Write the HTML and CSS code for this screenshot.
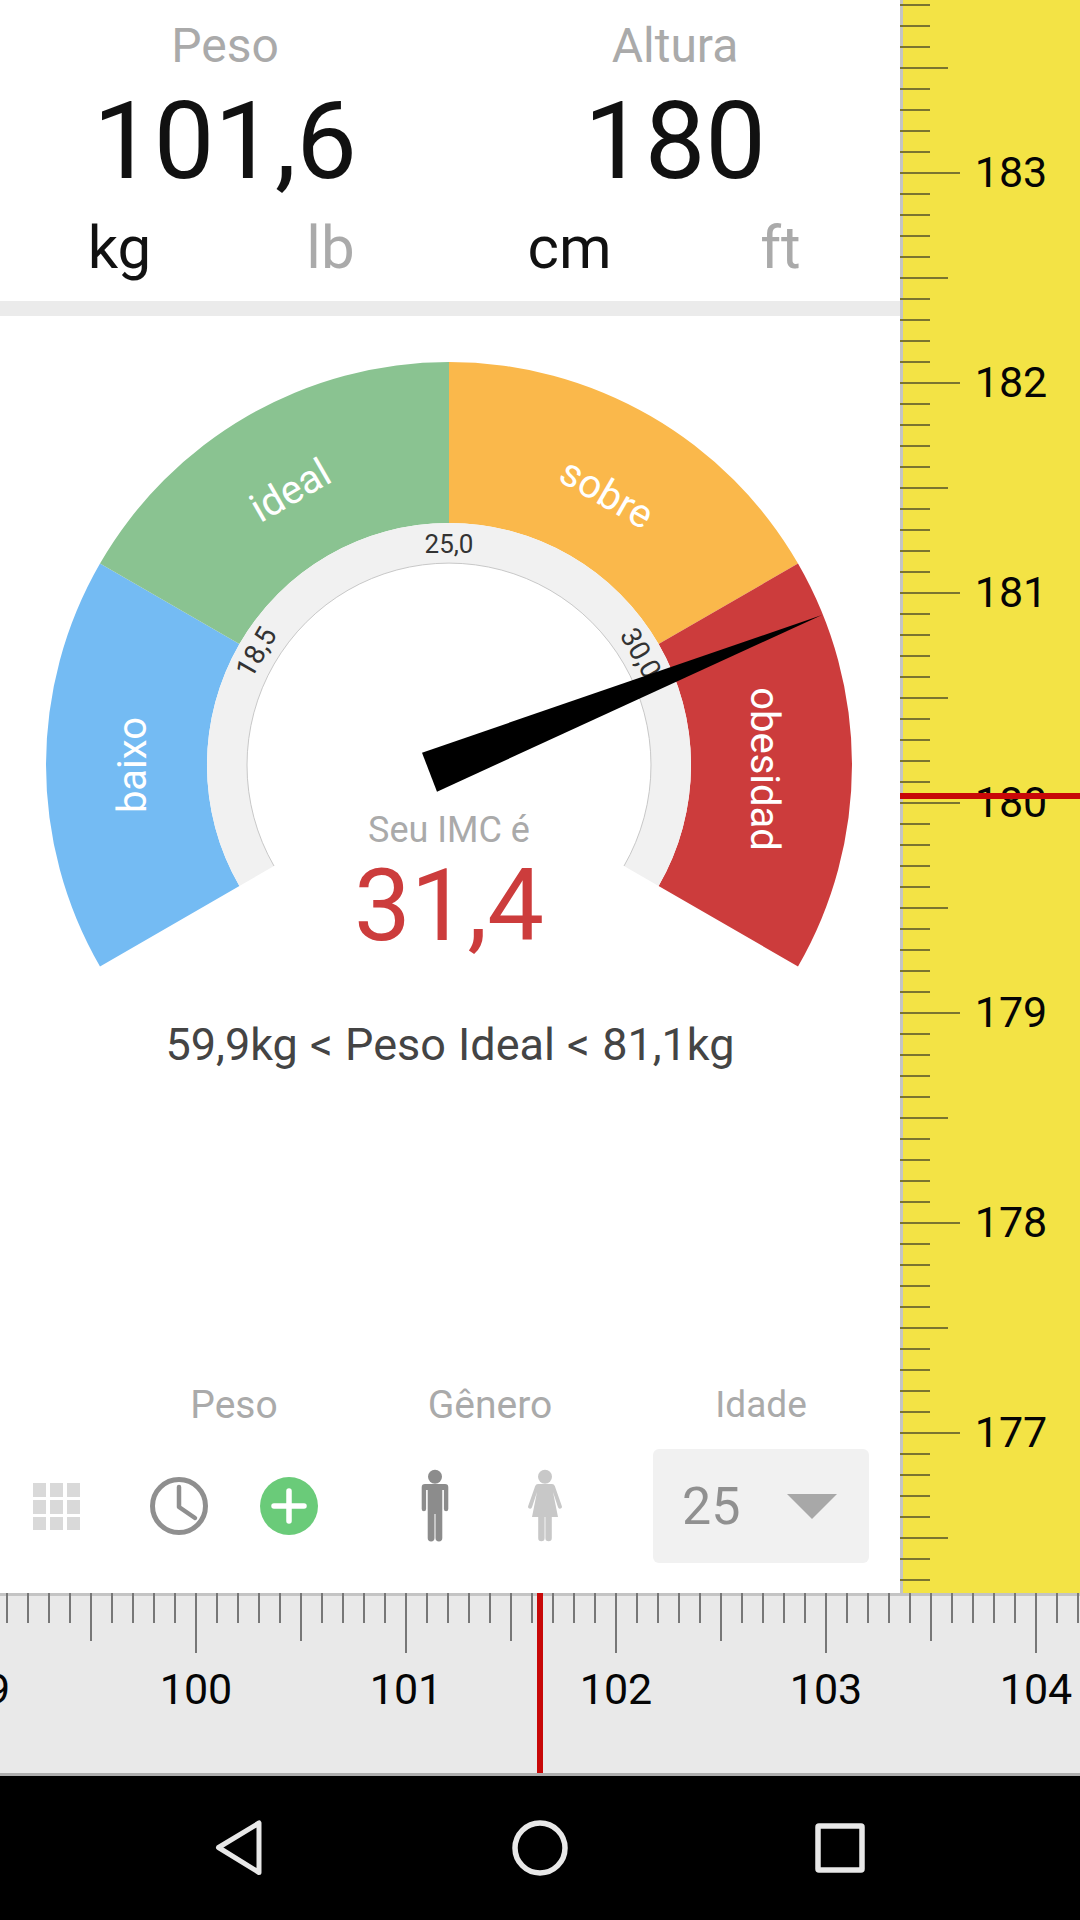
FILE: index.html
```html
<!DOCTYPE html>
<html lang="pt">
<head>
    <meta charset="UTF-8">
    <meta name="viewport" content="width=device-width, initial-scale=1.0">
    <title>Calculadora de IMC</title>
    <link rel="stylesheet" href="styles.css">
</head>
<body>
    <div class="app">
        <div class="top">
            <div class="main">
                <!-- Peso y altura -->
                <div class="readout">
                    <div class="readout-col">
                        <div class="readout-label">Peso</div>
                        <div class="readout-value">101,6</div>
                        <div class="units">
                            <span class="unit on">kg</span>
                            <span class="unit">lb</span>
                        </div>
                    </div>
                    <div class="readout-col">
                        <div class="readout-label">Altura</div>
                        <div class="readout-value">180</div>
                        <div class="units">
                            <span class="unit on">cm</span>
                            <span class="unit">ft</span>
                        </div>
                    </div>
                </div>
                <div class="divider"></div>

                <!-- Medidor -->
                <svg class="gauge" width="900" height="694" viewBox="0 0 900 694">
                    <path fill="#74bbf3" d="M100 650.5A403 403 0 0 1 100 247.5L239.4 328A242 242 0 0 0 239.4 570Z"/>
                    <path fill="#8ac391" d="M100 247.5A403 403 0 0 1 449 46V207A242 242 0 0 0 239.4 328Z"/>
                    <path fill="#fab84b" d="M449 46A403 403 0 0 1 798 247.5L658.6 328A242 242 0 0 0 449 207Z"/>
                    <path fill="#cc3c3c" d="M798 247.5A403 403 0 0 1 798 650.5L658.6 570A242 242 0 0 0 658.6 328Z"/>
                    <path fill="#f1f1f1" d="M239.4 570A242 242 0 1 1 658.6 570L624 550A202 202 0 1 0 274 550Z"/>
                    <path fill="none" stroke="#c8c8c8" stroke-width="1" d="M624 550A202 202 0 1 0 274 550"/>

                    <text class="zone" transform="translate(290 174) rotate(-30)" dy=".35em">ideal</text>
                    <text class="zone" transform="translate(607 177) rotate(30)" dy=".35em">sobre</text>
                    <text class="zone" transform="translate(132 449) rotate(-90)" dy=".35em">baixo</text>
                    <text class="zone" transform="translate(765 453) rotate(90)" dy=".35em">obesidad</text>

                    <text class="limit" transform="translate(449 228)" dy=".35em">25,0</text>
                    <text class="limit limit-side" transform="translate(256 336) rotate(-60)" dy=".35em">18,5</text>
                    <text class="limit limit-side" transform="translate(641 337) rotate(60)" dy=".35em">30,0</text>

                    <polygon fill="#000" points="422,436.7 437,475.7 822,299"/>

                    <text class="imc-label" x="449" y="526">Seu IMC é</text>
                    <text class="imc-value" x="449" y="624">31,4</text>
                </svg>
                <div class="ideal">59,9kg &lt; Peso Ideal &lt; 81,1kg</div>

                <!-- Controles -->
                <div class="tools">
                    <div class="tool-row tool-grid">
                        <svg width="47" height="47" viewBox="0 0 47 47" fill="#d9d9d9">
                            <rect x="0" y="0" width="13" height="14"/><rect x="17" y="0" width="13" height="14"/><rect x="34" y="0" width="13" height="14"/>
                            <rect x="0" y="17" width="13" height="14"/><rect x="17" y="17" width="13" height="14"/><rect x="34" y="17" width="13" height="14"/>
                            <rect x="0" y="34" width="13" height="13"/><rect x="17" y="34" width="13" height="13"/><rect x="34" y="34" width="13" height="13"/>
                        </svg>
                    </div>
                    <div class="tool-group tool-peso">
                        <div class="tool-label">Peso</div>
                        <div class="tool-row">
                            <svg width="58" height="58" viewBox="0 0 58 58" fill="none" stroke="#8f8f8f">
                                <circle cx="29" cy="29" r="26.5" stroke-width="5"/>
                                <path d="M29 10V30L45 41" stroke-width="4.5" stroke-linecap="round" stroke-linejoin="round"/>
                            </svg>
                            <svg width="58" height="58" viewBox="0 0 58 58">
                                <circle cx="29" cy="29" r="29" fill="#6acb79"/>
                                <path d="M29 14V44M14 29H44" stroke="#fff" stroke-width="5.5" stroke-linecap="round"/>
                            </svg>
                        </div>
                    </div>
                    <div class="tool-group tool-genero">
                        <div class="tool-label">Gênero</div>
                        <div class="tool-row">
                            <svg width="40" height="76" viewBox="0 0 40 76" fill="#8c8c8c">
                                <circle cx="20" cy="8.7" r="7"/>
                                <path d="M10 16H30a3.3 3.3 0 0 1 3.3 3.3V41a2.2 2.2 0 0 1-4.4 0V22h-1.6V70a3.4 3.4 0 0 1-6.8 0V46h-1V70a3.4 3.4 0 0 1-6.8 0V22h-1.6V41a2.2 2.2 0 0 1-4.4 0V19.3A3.3 3.3 0 0 1 10 16Z"/>
                            </svg>
                            <svg width="40" height="76" viewBox="0 0 40 76" fill="#c8c8c8">
                                <circle cx="20" cy="8.7" r="7"/>
                                <path d="M13 16H27q2 0 2.8 2L36.8 38a2 2 0 0 1-3.8 1.3L28 24 33 49H26.8V70a3.2 3.2 0 0 1-6.4 0V49h-.8V70a3.2 3.2 0 0 1-6.4 0V49H7L12 24 7 39.3a2 2 0 0 1-3.8-1.3L10.2 18q.8-2 2.8-2Z"/>
                            </svg>
                        </div>
                    </div>
                    <div class="tool-group tool-idade">
                        <div class="tool-label">Idade</div>
                        <div class="select">
                            <span class="select-value">25</span>
                            <span class="select-arrow"></span>
                        </div>
                    </div>
                </div>
            </div>

            <!-- Regla de altura -->
            <div class="ruler-v">
                <div class="ruler-v-label">183</div>
                <div class="ruler-v-label">182</div>
                <div class="ruler-v-label">181</div>
                <div class="ruler-v-label">180</div>
                <div class="ruler-v-label">179</div>
                <div class="ruler-v-label">178</div>
                <div class="ruler-v-label">177</div>
                <div class="marker-v"></div>
            </div>
        </div>

        <!-- Regla de peso -->
        <div class="ruler-h">
            <div class="ruler-h-labels">
                <div class="ruler-h-label">99</div>
                <div class="ruler-h-label">100</div>
                <div class="ruler-h-label">101</div>
                <div class="ruler-h-label">102</div>
                <div class="ruler-h-label">103</div>
                <div class="ruler-h-label">104</div>
            </div>
            <div class="marker-h"></div>
        </div>

        <!-- Barra de navegacion -->
        <div class="nav">
            <svg width="60" height="60" viewBox="0 0 60 60" fill="none" stroke="#e8e8e8" stroke-width="5" stroke-linejoin="round">
                <path d="M49 5V54.5L8.5 29.5Z"/>
            </svg>
            <svg width="60" height="60" viewBox="0 0 60 60" fill="none" stroke="#e8e8e8" stroke-width="5.5">
                <circle cx="30" cy="30" r="25"/>
            </svg>
            <svg width="60" height="60" viewBox="0 0 60 60" fill="none" stroke="#e8e8e8" stroke-width="5.5" stroke-linejoin="round">
                <rect x="8" y="8" width="44" height="44" rx="1"/>
            </svg>
        </div>
    </div>
</body>
</html>
```

FILE: styles.css
```css
body {
    margin: 0;
    background-color: #fff;
    font-family: Roboto, "Liberation Sans", sans-serif;
}
.app {
    display: flex;
    flex-direction: column;
    width: 1080px;
    height: 1920px;
    overflow: hidden;
}
.top {
    display: flex;
    height: 1593px;
}
.main {
    display: flex;
    flex-direction: column;
    width: 900px;
}

/* Peso y altura */
.readout {
    display: grid;
    grid-template-columns: 450px 450px;
    height: 301px;
}
.readout-col {
    text-align: center;
}
.readout-label {
    height: 60px;
    padding-top: 16px;
    font-size: 48px;
    line-height: 60px;
    color: #aaa;
}
.readout-value {
    height: 120px;
    margin-top: 5px;
    font-size: 108px;
    line-height: 120px;
    color: #111;
}
.units {
    display: grid;
    grid-template-columns: 211px 211px;
    margin-top: 12px;
    padding-left: 14px;
    font-size: 60px;
    line-height: 70px;
    color: #aaa;
}
.unit.on {
    color: #111;
}
.divider {
    height: 15px;
    background-color: #ebebeb;
}

/* Medidor */
.gauge {
    display: block;
    font-family: Roboto, "Liberation Sans", sans-serif;
}
.zone {
    font-size: 40px;
    fill: #fff;
    text-anchor: middle;
}
.limit {
    font-size: 26px;
    fill: #333;
    text-anchor: middle;
}
.limit-side {
    font-size: 28px;
}
.imc-label {
    font-size: 36px;
    fill: #aaa;
    text-anchor: middle;
}
.imc-value {
    font-size: 101px;
    fill: #cc3c3c;
    text-anchor: middle;
}
.ideal {
    margin-top: 5px;
    font-size: 45px;
    line-height: 60px;
    word-spacing: 1px;
    text-align: center;
    color: #444;
}

/* Controles */
.tools {
    display: flex;
    align-items: flex-end;
    margin-top: auto;
    padding: 0 0 30px 33px;
}
.tool-group {
    display: flex;
    flex-direction: column;
    align-items: center;
}
.tool-label {
    margin-bottom: 22px;
    font-size: 39px;
    line-height: 44px;
    color: #aaa;
}
.tool-row {
    display: flex;
    align-items: center;
    height: 114px;
}
.tool-peso {
    margin-left: 70px;
}
.tool-peso .tool-row {
    gap: 52px;
}
.tool-genero {
    margin-left: 97px;
}
.tool-genero .tool-row {
    gap: 70px;
}
.tool-idade {
    margin-left: 88px;
}
.tool-idade .tool-label {
    font-size: 37px;
}
.select {
    display: flex;
    align-items: center;
    width: 216px;
    height: 114px;
    box-sizing: border-box;
    padding-left: 29px;
    border-radius: 6px;
    background-color: #f1f1f1;
}
.select-value {
    font-size: 52px;
    color: #909090;
}
.select-arrow {
    margin-left: 47px;
    border-left: 25px solid transparent;
    border-right: 25px solid transparent;
    border-top: 25px solid #a8a8a8;
}

/* Reglas */
.ruler-v {
    position: relative;
    width: 180px;
    box-sizing: border-box;
    padding: 67px 0 0 42px;
    background-color: #f3e345;
    background-image:
        linear-gradient(#7b7530 2px, transparent 2px),
        linear-gradient(#7b7530 2px, transparent 2px),
        linear-gradient(#7b7530 2px, transparent 2px),
        linear-gradient(#c4c4c4, #c4c4c4);
    background-size: 30px 21px, 48px 105px, 60px 210px, 3px 100%;
    background-position: 0 4px, 0 67px, 0 172px, 0 0;
    background-repeat: repeat-y;
}
.ruler-v-label {
    height: 210px;
    font-size: 43px;
    line-height: 210px;
    text-align: center;
    color: #050505;
}
.marker-v {
    position: absolute;
    top: 793px;
    left: 0;
    width: 180px;
    height: 6px;
    background-color: #c80808;
}
.ruler-h {
    position: relative;
    height: 180px;
    overflow: hidden;
    border-bottom: 3px solid #aeaeae;
    background-color: #e9e9e9;
    background-image:
        linear-gradient(90deg, #777 2px, transparent 2px),
        linear-gradient(90deg, #777 2px, transparent 2px),
        linear-gradient(90deg, #777 2px, transparent 2px),
        linear-gradient(#c4c4c4, #c4c4c4);
    background-size: 21px 30px, 105px 48px, 210px 60px, 100% 3px;
    background-position: 6px 0, 90px 0, 195px 0, 0 0;
    background-repeat: repeat-x;
}
.ruler-h-labels {
    display: flex;
    margin-left: -119px;
    padding-top: 66px;
}
.ruler-h-label {
    flex: none;
    width: 210px;
    font-size: 43px;
    line-height: 60px;
    text-align: center;
    color: #050505;
}
.marker-h {
    position: absolute;
    top: 0;
    left: 537px;
    width: 6px;
    height: 180px;
    background-color: #c80808;
}

/* Barra de navegacion */
.nav {
    display: grid;
    grid-template-columns: repeat(3, 300px);
    justify-content: center;
    justify-items: center;
    align-items: center;
    height: 144px;
    background-color: #000;
}
```
